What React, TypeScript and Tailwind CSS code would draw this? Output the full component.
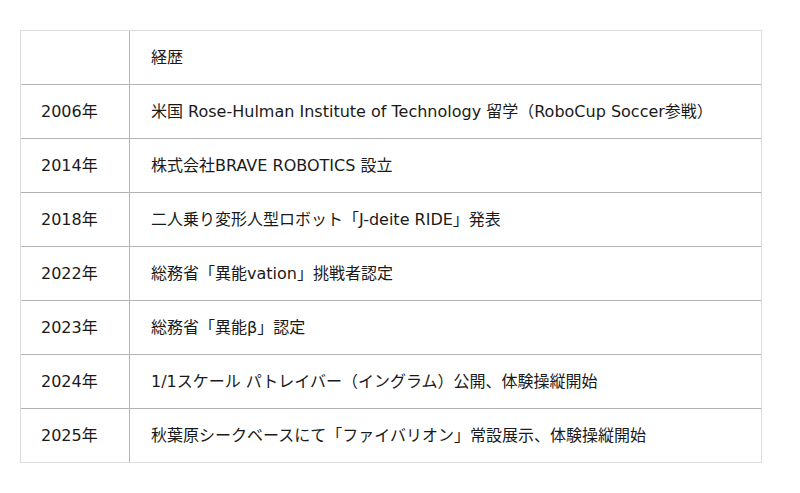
import React from 'react';

// Career timeline table
const rows: [string, string][] = [
  ['', '経歴'],
  ['2006年', '米国 Rose-Hulman Institute of Technology 留学（RoboCup Soccer参戦）'],
  ['2014年', '株式会社BRAVE ROBOTICS 設立'],
  ['2018年', '二人乗り変形人型ロボット「J-deite RIDE」発表'],
  ['2022年', '総務省「異能vation」挑戦者認定'],
  ['2023年', '総務省「異能β」認定'],
  ['2024年', '1/1スケール パトレイバー（イングラム）公開、体験操縦開始'],
  ['2025年', '秋葉原シークベースにて「ファイバリオン」常設展示、体験操縦開始'],
];

export default function App() {
  return (
    <div
      className="w-[800px] h-[493px] bg-white pt-[30px] pl-[20px] text-[16px] text-[#1a1a1a]"
      style={{ fontFamily: '"DejaVu Sans", "Noto Sans CJK JP", sans-serif' }}
    >
      <div className="w-[742px] border border-[#dcdcdc]">
        {rows.map(([year, text], i) => (
          <div
            key={i}
            className={i > 0 ? 'flex h-[54px] border-t border-[#b4b4b4]' : 'flex h-[53px]'}
          >
            <div className="w-[109px] shrink-0 border-r border-[#b4b4b4] pl-[20px] flex items-center">
              {year}
            </div>
            <div className="flex-1 pl-[21px] flex items-center whitespace-nowrap">{text}</div>
          </div>
        ))}
      </div>
    </div>
  );
}
